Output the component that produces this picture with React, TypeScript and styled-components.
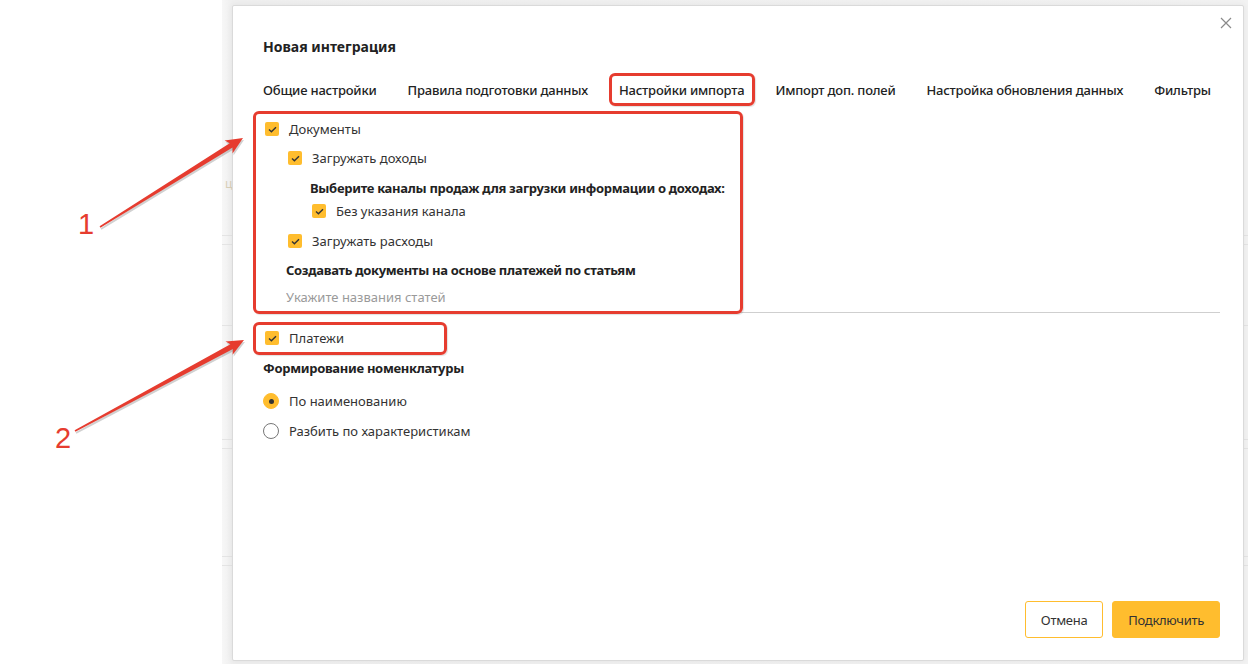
import React from 'react';
import styled, {createGlobalStyle} from 'styled-components';

const GlobalStyle = createGlobalStyle`
  html, body {
    margin: 0;
    padding: 0;
    background: #fff;
  }
  body {
    font-family: "Noto Sans", "Liberation Sans", Arial, sans-serif;
    color: #333;
  }
`;

const YELLOW = '#ffbd2e';
const RED = '#e63c2f';

const Page = styled.div`
  position: relative;
  display: flex;
  width: 1248px;
  height: 664px;
  overflow: hidden;
`;

const Gutter = styled.div`
  width: 222px;
  flex: none;
  background: #fff;
`;

const Backdrop = styled.div`
  position: relative;
  flex: 1;
  display: flex;
  flex-direction: column;
  background: linear-gradient(90deg, #f7f7f7 0, #efefef 10px, #f2f2f2 100%);
`;

const BackRow = styled.div<{ $h: number }>`
  height: ${p => p.$h}px;
  flex: none;
  border-bottom: 1px solid #e4e4e4;
  display: flex;
  align-items: flex-start;
`;

const BackText = styled.span`
  margin: 175px 0 0 3px;
  font-size: 12px;
  color: #d8cfb8;
`;

const Modal = styled.div`
  position: absolute;
  left: 10px;
  top: 5px;
  right: 4px;
  bottom: 3px;
  display: flex;
  flex-direction: column;
  background: #fff;
  border: 1px solid #dadada;
  border-radius: 2px;
  box-shadow: 0 0 6px rgba(0, 0, 0, 0.06);
  padding: 31px 23px 22px 30px;
  box-sizing: border-box;
`;

const Close = styled.button`
  position: absolute;
  top: 10px;
  right: 10px;
  width: 14px;
  height: 14px;
  padding: 0;
  border: 0;
  background: none;
  display: flex;
  align-items: center;
  justify-content: center;
  cursor: pointer;
`;

const Title = styled.h2`
  margin: 0;
  font-size: 14px;
  line-height: 20px;
  font-weight: 700;
  color: #222;
`;

const Tabs = styled.div`
  display: flex;
  gap: 31px;
  margin-top: 15px;
`;

const Tab = styled.div<{ $active?: boolean }>`
  padding: 8px 0 4px;
  font-size: 13px;
  line-height: 20px;
  font-weight: 500;
  letter-spacing: -0.2px;
  color: #222;
  white-space: nowrap;
  border-bottom: 2px solid ${p => (p.$active ? YELLOW : 'transparent')};
`;

const Content = styled.div`
  display: flex;
  flex-direction: column;
  margin-top: 13px;
`;

const Group = styled.div<{ $indent: number }>`
  display: flex;
  flex-direction: column;
  padding-left: ${p => p.$indent}px;
`;

const Row = styled.label<{ $mt?: number }>`
  display: flex;
  align-items: center;
  height: 20px;
  margin-top: ${p => p.$mt ?? 0}px;
  font-size: 13px;
  color: #333;
`;

const Box = styled.span`
  width: 14px;
  height: 14px;
  margin-left: 2px;
  margin-right: 10px;
  border-radius: 2px;
  background: ${YELLOW};
  display: flex;
  align-items: center;
  justify-content: center;
  flex: none;
`;

const Radio = styled.span<{ $on?: boolean }>`
  width: 16px;
  height: 16px;
  margin-right: 10px;
  box-sizing: border-box;
  border-radius: 50%;
  flex: none;
  display: flex;
  align-items: center;
  justify-content: center;
  background: ${p => (p.$on ? YELLOW : '#fff')};
  border: 1px solid ${p => (p.$on ? YELLOW : '#777')};

  &::after {
    content: '';
    display: ${p => (p.$on ? 'block' : 'none')};
    width: 5px;
    height: 5px;
    border-radius: 50%;
    background: #333;
  }
`;

const Heading = styled.div<{ $mt?: number }>`
  height: 20px;
  line-height: 20px;
  margin-top: ${p => p.$mt ?? 0}px;
  font-size: 13px;
  font-weight: 700;
  letter-spacing: -0.3px;
  color: #222;
  white-space: nowrap;
`;

const ArticleInput = styled.input`
  margin-top: 7px;
  height: 26px;
  padding: 0 0 5px;
  border: 0;
  border-bottom: 1px solid #cfcfcf;
  outline: none;
  font-family: inherit;
  font-size: 13px;
  line-height: 20px;
  color: #333;
  background: transparent;
  box-sizing: border-box;
  margin-left: -23px;
  padding-left: 23px;

  &::placeholder {
    color: #9a9a9a;
  }
`;

const Footer = styled.div`
  margin-top: auto;
  display: flex;
  justify-content: flex-end;
  gap: 9px;
`;

const Button = styled.button<{ $primary?: boolean }>`
  height: 37px;
  padding: 0 15px;
  border-radius: 3px;
  font-family: inherit;
  font-size: 13px;
  letter-spacing: -0.3px;
  color: #333;
  cursor: pointer;
  border: 1px solid ${YELLOW};
  background: ${p => (p.$primary ? YELLOW : '#fff')};
`;

const Overlay = styled.div`
  position: absolute;
  inset: 0;
  pointer-events: none;
`;

const Highlight = styled.div<{ $x: number; $y: number; $w: number; $h: number }>`
  position: absolute;
  left: ${p => p.$x}px;
  top: ${p => p.$y}px;
  width: ${p => p.$w}px;
  height: ${p => p.$h}px;
  box-sizing: border-box;
  border: 3px solid ${RED};
  border-radius: 6px;
  box-shadow: 1px 1px 1px rgba(0, 0, 0, 0.12);
`;

const Check = () => (
  <svg width="9" height="7" viewBox="0 0 9 7">
    <path d="M1 3.6 L3.4 5.8 L8 1.2" fill="none" stroke="#333" strokeWidth="1.4"/>
  </svg>
);

function CheckRow({label, mt}: { label: string; mt?: number }) {
  return (
    <Row $mt={mt}>
      <Box><Check/></Box>
      {label}
    </Row>
  );
}

function arrow(x1: number, y1: number, x2: number, y2: number) {
  const len = Math.hypot(x2 - x1, y2 - y1);
  const ux = (x2 - x1) / len;
  const uy = (y2 - y1) / len;
  const px = -uy;
  const py = ux;
  const nx = x2 - ux * 17;
  const ny = y2 - uy * 17;
  const bx = x2 - ux * 14;
  const by = y2 - uy * 14;
  const pts = [
    [x1 + px * 0.8, y1 + py * 0.8],
    [bx + px * 2.6, by + py * 2.6],
    [nx + px * 7.5, ny + py * 7.5],
    [x2, y2],
    [nx - px * 7.5, ny - py * 7.5],
    [bx - px * 2.6, by - py * 2.6],
    [x1 - px * 0.8, y1 - py * 0.8],
  ];
  return pts.map(p => p.map(v => v.toFixed(1)).join(',')).join(' ');
}

const arrows = [
  {from: [100, 227], to: [243, 138]},
  {from: [75, 431], to: [244, 340]},
];

const marks = [
  {x: 78, y: 234, n: '1'},
  {x: 55, y: 448, n: '2'},
];

const tabs = [
  'Общие настройки',
  'Правила подготовки данных',
  'Настройки импорта',
  'Импорт доп. полей',
  'Настройка обновления данных',
  'Фильтры',
];

export default function App() {
  return (
    <>
      <GlobalStyle/>
      <Page>
        <Gutter/>
        <Backdrop>
          <BackRow $h={235}><BackText>ц</BackText></BackRow>
          <BackRow $h={8}/>
          <BackRow $h={80}/>
          <BackRow $h={113}/>
          <BackRow $h={8}/>
          <BackRow $h={107}/>
          <BackRow $h={8}/>

          <Modal>
            <Close aria-label="Закрыть">
              <svg width="12" height="12" viewBox="0 0 12 12">
                <path d="M1 1 L11 11 M11 1 L1 11" stroke="#8a8a8a" strokeWidth="1.2"/>
              </svg>
            </Close>
            <Title>Новая интеграция</Title>
            <Tabs>
              {tabs.map(t => (
                <Tab key={t} $active={t === 'Настройки импорта'}>{t}</Tab>
              ))}
            </Tabs>

            <Content>
              <CheckRow label="Документы"/>
              <Group $indent={23}>
                <CheckRow label="Загружать доходы" mt={9}/>
                <Group $indent={24}>
                  <Heading $mt={10}>Выберите каналы продаж для загрузки информации о доходах:</Heading>
                  <CheckRow label="Без указания канала" mt={3}/>
                </Group>
                <CheckRow label="Загружать расходы" mt={10}/>
                <Heading $mt={9}>Создавать документы на основе платежей по статьям</Heading>
                <ArticleInput placeholder="Укажите названия статей"/>
              </Group>

              <CheckRow label="Платежи" mt={15}/>
              <Heading $mt={10}>Формирование номенклатуры</Heading>
              <Row $mt={13}><Radio $on/>По наименованию</Row>
              <Row $mt={10}><Radio/>Разбить по характеристикам</Row>
            </Content>

            <Footer>
              <Button>Отмена</Button>
              <Button $primary>Подключить</Button>
            </Footer>
          </Modal>
        </Backdrop>

        <Overlay>
          <Highlight $x={609} $y={73} $w={146} $h={33}/>
          <Highlight $x={253} $y={111} $w={490} $h={203}/>
          <Highlight $x={253} $y={322} $w={194} $h={33}/>
          <svg width="1248" height="664" viewBox="0 0 1248 664">
            {arrows.map((a, i) => (
              <g key={i}>
                <polygon points={arrow(a.from[0] + 1, a.from[1] + 2, a.to[0] + 1, a.to[1] + 2)} fill="rgba(0,0,0,0.18)"/>
                <polygon points={arrow(a.from[0], a.from[1], a.to[0], a.to[1])} fill={RED}/>
              </g>
            ))}
            {marks.map(m => (
              <text key={m.n} x={m.x} y={m.y} fill={RED} fontSize="29"
                    fontFamily='"Liberation Sans", Arial, sans-serif'>{m.n}</text>
            ))}
          </svg>
        </Overlay>
      </Page>
    </>
  );
}
